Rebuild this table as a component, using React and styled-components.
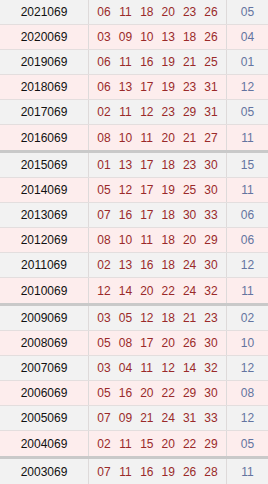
import React from 'react';
import styled, { createGlobalStyle } from 'styled-components';

const GlobalStyle = createGlobalStyle`
  html, body {
    margin: 0;
    padding: 0;
    background: #ffffff;
  }
`;

const draws = [
  ['2021069', ['06', '11', '18', '20', '23', '26'], '05'],
  ['2020069', ['03', '09', '10', '13', '18', '26'], '04'],
  ['2019069', ['06', '11', '16', '19', '21', '25'], '01'],
  ['2018069', ['06', '13', '17', '19', '23', '31'], '12'],
  ['2017069', ['02', '11', '12', '23', '29', '31'], '05'],
  ['2016069', ['08', '10', '11', '20', '21', '27'], '11'],
  ['2015069', ['01', '13', '17', '18', '23', '30'], '15'],
  ['2014069', ['05', '12', '17', '19', '25', '30'], '11'],
  ['2013069', ['07', '16', '17', '18', '30', '33'], '06'],
  ['2012069', ['08', '10', '11', '18', '20', '29'], '06'],
  ['2011069', ['02', '13', '16', '18', '24', '30'], '12'],
  ['2010069', ['12', '14', '20', '22', '24', '32'], '11'],
  ['2009069', ['03', '05', '12', '18', '21', '23'], '02'],
  ['2008069', ['05', '08', '17', '20', '26', '30'], '10'],
  ['2007069', ['03', '04', '11', '12', '14', '32'], '12'],
  ['2006069', ['05', '16', '20', '22', '29', '30'], '08'],
  ['2005069', ['07', '09', '21', '24', '31', '33'], '12'],
  ['2004069', ['02', '11', '15', '20', '22', '29'], '05'],
  ['2003069', ['07', '11', '16', '19', '26', '28'], '11'],
];

// split into blocks of six rows, each block closed by a thick rule
const groups = [];
for (let i = 0; i < draws.length; i += 6) {
  groups.push(draws.slice(i, i + 6).map((d, j) => ({ d, index: i + j })));
}

const TableStyled = styled.div`
  width: 268px;
  font-family: 'Liberation Sans', Arial, sans-serif;
  font-size: 12px;
`;

const GroupStyled = styled.div`
  border-bottom: ${(props) => (props.isLast ? 'none' : '3px solid #c9c9c9')};
`;

const RowStyled = styled.div`
  display: grid;
  grid-template-columns: 89px 138px 1fr;
  height: 25px;
  box-sizing: border-box;
  border-bottom: ${(props) => (props.noBorder ? 'none' : '1px solid #e3dede')};
  background: ${(props) => (props.isPink ? '#fdeded' : '#f2f2f2')};
`;

const CellStyled = styled.div`
  display: flex;
  align-items: center;
  justify-content: center;
  box-sizing: border-box;
  border-right: ${(props) => (props.last ? 'none' : '1px solid #dedada')};
`;

const IssueStyled = styled(CellStyled)`
  color: #111111;
`;

const RedBalls = styled(CellStyled)`
  gap: 8px;
  color: #9a2a2a;
`;

const BlueBall = styled(CellStyled)`
  color: #6474a0;
`;

const Num = styled.span`
  display: inline-block;
  width: 13.4px;
  text-align: center;
`;

const App = () => (
  <>
    <GlobalStyle />
    <TableStyled>
      {groups.map((rows, gi) => (
        <GroupStyled key={gi} isLast={gi === groups.length - 1}>
          {rows.map(({ d: [issue, reds, blue], index }, ri) => (
            <RowStyled
              key={issue}
              isPink={index % 2 === 1}
              noBorder={ri === rows.length - 1}
            >
              <IssueStyled>{issue}</IssueStyled>
              <RedBalls>
                {reds.map((n, k) => (
                  <Num key={k}>{n}</Num>
                ))}
              </RedBalls>
              <BlueBall last>{blue}</BlueBall>
            </RowStyled>
          ))}
        </GroupStyled>
      ))}
    </TableStyled>
  </>
);

export default App;
